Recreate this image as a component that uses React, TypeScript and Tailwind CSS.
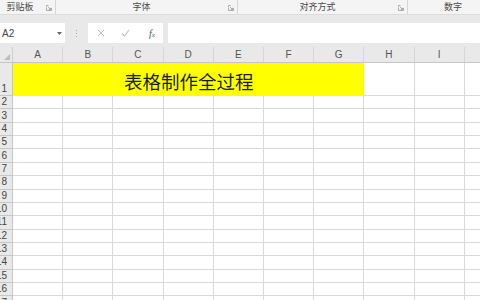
import React from 'react'

const columns = ['A', 'B', 'C', 'D', 'E', 'F', 'G', 'H', 'I', '']
const rows = [2, 3, 4, 5, 6, 7, 8, 9, 10, 11, 12, 13, 14, 15, 16, 17]

const Launcher = () => (
    <svg width="6" height="6" viewBox="0 0 6 6" className="mb-[3px] shrink-0" fill="none" stroke="#9a9a9a" strokeWidth="0.8">
        <path d="M0.5 2.5 V0.5 H2.5" />
        <path d="M0.5 3 V5.5 H5.5 V3" />
        <path d="M2 2 L4.5 4.5 M4.5 2.8 V4.5 H2.8" />
    </svg>
)

interface GroupProps {
    label: string;
    className: string;
    launcher?: boolean;
}

const RibbonGroup: React.FC<GroupProps> = ({ label, className, launcher = true }) => (
    <div className={`shrink-0 flex items-end h-full ${className}`}>
        <div className="flex-1 text-center text-[9px] leading-[14px] text-[#4a4a4a]">{label}</div>
        {launcher && <div className="w-[10px] flex justify-end pr-[3px]"><Launcher /></div>}
    </div>
)

const App: React.FC = () => {
    return (
        <div
            className="w-[480px] h-[300px] overflow-hidden bg-[#e9e9e9] flex flex-col"
            style={{ fontFamily: '"Liberation Sans", "Noto Sans CJK SC", sans-serif' }}
        >
            {/* ribbon group labels */}
            <div className="h-[15px] shrink-0 flex bg-[#f4f4f4] border-b border-[#dcdcdc]">
                <RibbonGroup label="剪贴板" className="ml-[-5px] w-[61px] border-r border-[#d6d6d6]" />
                <RibbonGroup label="字体" className="w-[182px] border-r border-[#d6d6d6]" />
                <RibbonGroup label="对齐方式" className="w-[170px] border-r border-[#d6d6d6]" />
                <RibbonGroup label="数字" className="w-[90px]" launcher={false} />
            </div>

            {/* formula bar */}
            <div className="shrink-0 pt-[8px] pb-[4px] flex items-stretch">
                <div className="h-[20px] w-[65px] shrink-0 bg-white flex items-center justify-between pl-[2px] pr-[3px]">
                    <span className="text-[10px] text-[#444]">A2</span>
                    <svg width="5" height="3" viewBox="0 0 5 3"><path d="M0 0 H5 L2.5 3 Z" fill="#666" /></svg>
                </div>
                <div className="w-[23px] shrink-0 flex items-center justify-center">
                    <div className="flex flex-col gap-[2px]">
                        <div className="w-[1px] h-[1px] bg-[#aaa]" />
                        <div className="w-[1px] h-[1px] bg-[#aaa]" />
                        <div className="w-[1px] h-[1px] bg-[#aaa]" />
                    </div>
                </div>
                <div className="w-[75px] shrink-0 bg-white flex items-center pl-[9px] gap-[16px]">
                    <svg width="8" height="8" viewBox="0 0 8 8" stroke="#c2c2c2" strokeWidth="1">
                        <path d="M1 1 L7 7 M7 1 L1 7" />
                    </svg>
                    <svg width="9" height="8" viewBox="0 0 9 8" fill="none" stroke="#c2c2c2" strokeWidth="1.1">
                        <path d="M1 4.5 L3.5 7 L8 1" />
                    </svg>
                    <span
                        className="text-[10px] italic text-[#555] ml-[3px]"
                        style={{ fontFamily: '"Liberation Serif", serif' }}
                    >
                        f<span className="text-[7px]">x</span>
                    </span>
                </div>
                <div className="w-[5px] shrink-0" />
                <div className="flex-1 bg-white" />
            </div>

            {/* column headers */}
            <div className="h-[16px] shrink-0 flex border-b border-[#c6c6c6] bg-[#e9e9e9]">
                <div className="w-[13px] shrink-0 border-r border-[#cfcfcf] flex items-end justify-end pr-[2px] pb-[2px]">
                    <svg width="6" height="6" viewBox="0 0 6 6"><path d="M6 0 V6 H0 Z" fill="#bdbdbd" /></svg>
                </div>
                {columns.map((c, i) => (
                    <div key={i} className="w-[50.2px] shrink-0 border-r border-[#d6d6d6] text-center text-[10px] leading-[15px] text-[#555]">
                        {c}
                    </div>
                ))}
            </div>

            {/* row 1 with merged title */}
            <div className="h-[33px] shrink-0 flex">
                <div className="w-[13px] shrink-0 bg-[#e9e9e9] border-r border-b border-[#c6c6c6] flex items-end justify-end pr-[5px] text-[10px] leading-[12px] text-[#444]">
                    1
                </div>
                <div className="w-[351.4px] shrink-0 bg-[#ffff00] flex items-center justify-center pt-[4px] text-[18.5px] text-[#1c1c1c]" style={{ fontFamily: '"Noto Sans CJK SC", sans-serif' }}>
                    表格制作全过程
                </div>
                {columns.slice(7).map((c, i) => (
                    <div key={i} className="w-[50.2px] shrink-0 bg-white border-r border-b border-[#dadada]" />
                ))}
            </div>

            {/* remaining rows */}
            {rows.map((r) => (
                <div key={r} className="h-[13.36px] shrink-0 flex">
                    <div className="w-[13px] shrink-0 bg-[#e9e9e9] border-r border-b border-[#c6c6c6] flex items-center justify-end pr-[5px] text-[10px] leading-[12px] text-[#444] overflow-hidden whitespace-nowrap">
                        {r}
                    </div>
                    {columns.map((c, i) => (
                        <div key={i} className="w-[50.2px] shrink-0 bg-white border-r border-b border-[#dadada]" />
                    ))}
                </div>
            ))}
        </div>
    )
}

export default App
